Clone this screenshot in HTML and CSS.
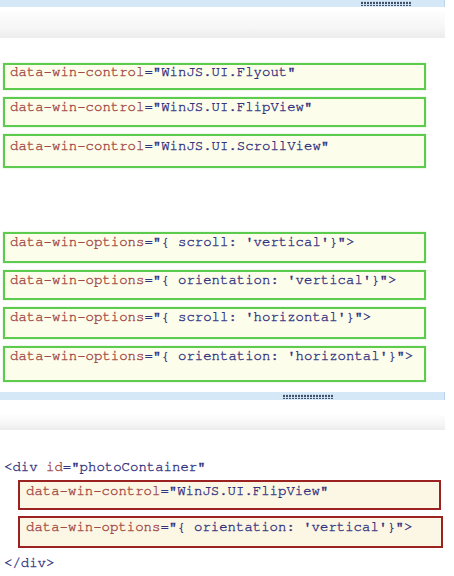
FILE: index.html
```html
<!DOCTYPE html>
<html>
<head>
<meta charset="utf-8">
<link rel="stylesheet" href="styles.css">
</head>
<body>
<div class="page">
  <div class="bar bar-top"><span class="grip"></span></div>
  <div class="band band-top"></div>

  <div class="group group-controls">
    <div class="box green h27 tight"><span class="attr">data-win-control</span><span class="str">="WinJS.UI.Flyout"</span></div>
    <div class="box green h30"><span class="attr">data-win-control</span><span class="str">="WinJS.UI.FlipView"</span></div>
    <div class="box green h34 loose"><span class="attr">data-win-control</span><span class="str">="WinJS.UI.ScrollView"</span></div>
  </div>

  <div class="group group-options">
    <div class="box green h31"><span class="attr">data-win-options</span><span class="str">="{ scroll: 'vertical'}"&gt;</span></div>
    <div class="box green h30"><span class="attr">data-win-options</span><span class="str">="{ orientation: 'vertical'}"&gt;</span></div>
    <div class="box green h32"><span class="attr">data-win-options</span><span class="str">="{ scroll: 'horizontal'}"&gt;</span></div>
    <div class="box green h36"><span class="attr">data-win-options</span><span class="str">="{ orientation: 'horizontal'}"&gt;</span></div>
  </div>

  <div class="bar bar-bottom"><span class="grip"></span></div>
  <div class="band band-bottom"></div>

  <div class="answer">
    <div class="code-line"><span class="str">&lt;div </span><span class="attr">id</span><span class="str">="photoContainer"</span></div>
    <div class="box red r1"><span class="attr">data-win-control</span><span class="str">="WinJS.UI.FlipView"</span></div>
    <div class="box red r2"><span class="attr">data-win-options</span><span class="str">="{ orientation: 'vertical'}"&gt;</span></div>
    <div class="code-line close"><span class="str">&lt;/div&gt;</span></div>
  </div>
</div>
</body>
</html>
```

FILE: styles.css
```css
html, body {
  margin: 0;
  padding: 0;
  background: #ffffff;
}

.page {
  width: 454px;
  height: 576px;
  overflow: hidden;
  font-family: "Nimbus Mono PS", "FreeMono", "Courier New", "Liberation Mono", monospace;
  font-size: 14px;
  line-height: 16px;
  -webkit-text-stroke: 0.35px;
}

.bar {
  box-sizing: border-box;
  width: 445px;
  background: #d5e8f8;
  border-right: 1px solid #bcd4ea;
  display: flex;
  justify-content: flex-end;
  align-items: center;
}

.bar-top {
  height: 7px;
  padding-right: 32px;
}

.bar-bottom {
  height: 8px;
  margin-top: 10px;
  padding-right: 111px;
}

.grip {
  display: block;
  width: 51px;
  height: 5px;
  background-image:
    linear-gradient(rgba(213, 232, 248, 0.85) 50%, transparent 50%),
    repeating-linear-gradient(90deg, #42526c 0 2px, transparent 2px 3px);
  background-size: 3px 3px, auto;
}

.bar-bottom .grip {
  width: 50px;
}

.band {
  width: 445px;
  background: linear-gradient(#fdfdfd, #f6f6f6 60%, #ececec);
}

.band-top {
  margin-top: 5px;
  height: 26px;
}

.band-bottom {
  margin-top: 15px;
  height: 15px;
}

.group {
  display: flex;
  flex-direction: column;
  gap: 7px;
  padding-left: 3px;
}

.group-controls {
  margin-top: 25px;
}

.group-options {
  margin-top: 64px;
}

.box {
  box-sizing: border-box;
  white-space: pre;
  line-height: 14px;
  padding: 1px 5px 0;
}

.green {
  width: 423px;
  border: 2px solid #5dcb4d;
  background: #fdfdec;
  box-shadow: 0 0 1px rgba(93, 203, 77, 0.6);
}

.tight { padding-top: 0; }
.loose { padding-top: 3px; }

.h27 { height: 27px; }
.h30 { height: 30px; }
.h31 { height: 31px; }
.h32 { height: 32px; }
.h34 { height: 34px; }
.h36 { height: 36px; }

.attr { color: #a24a46; }
.str { color: #33337f; }

.answer {
  display: flex;
  flex-direction: column;
  margin-top: 29px;
}

.code-line {
  padding-left: 4px;
  white-space: pre;
}

.close {
  margin-top: 7px;
}

.red {
  margin-left: 18px;
  border: 2px solid #9c2222;
  background: #fcf6e4;
  padding-left: 6px;
  padding-top: 2px;
}

.r1 {
  margin-top: 5px;
  width: 423px;
  height: 30px;
}

.r2 {
  margin-top: 6px;
  width: 425px;
  height: 32px;
}
```
